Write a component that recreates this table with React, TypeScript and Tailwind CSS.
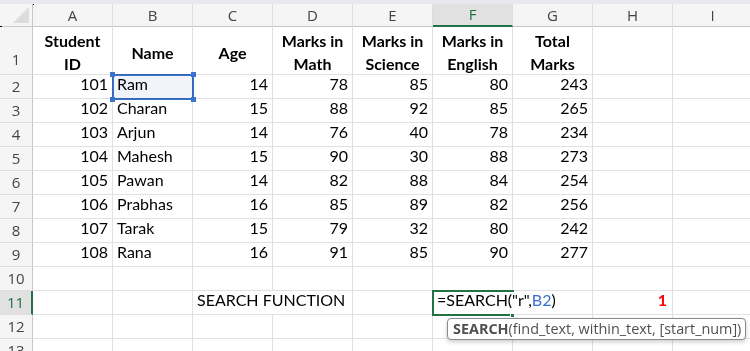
import React from 'react';

const cols = ['A', 'B', 'C', 'D', 'E', 'F', 'G', 'H', 'I'];

const data: (number | string)[][] = [
  [101, 'Ram', 14, 78, 85, 80, 243],
  [102, 'Charan', 15, 88, 92, 85, 265],
  [103, 'Arjun', 14, 76, 40, 78, 234],
  [104, 'Mahesh', 15, 90, 30, 88, 273],
  [105, 'Pawan', 14, 82, 88, 84, 254],
  [106, 'Prabhas', 16, 85, 89, 82, 256],
  [107, 'Tarak', 15, 79, 32, 80, 242],
  [108, 'Rana', 16, 91, 85, 90, 277],
];

const headings = [['Student', 'ID'], ['Name'], ['Age'], ['Marks in', 'Math'], ['Marks in', 'Science'], ['Marks in', 'English'], ['Total', 'Marks']];

const cellFont = { fontFamily: 'Lato, "Liberation Sans", sans-serif' };
const uiFont = { fontFamily: '"Open Sans", "Noto Sans", sans-serif' };

function RowHead({ n, active, h = 'h-[24px]' }: { n: number; active?: boolean; h?: string }) {
  return (
    <div
      style={uiFont}
      className={`${h} flex items-center justify-center text-[15px] ${active ? 'bg-[#e1e1e1] text-[#1e7145] border-r-2 border-r-[#217346]' : 'bg-[#f5f5f5] text-[#444] border-r border-r-[#c8c8c8]'} border-b border-b-[#dedede]`}
    >
      {n}
    </div>
  );
}

function Cell({ children, right, noRight, className = '' }: { children?: React.ReactNode; right?: boolean; noRight?: boolean; className?: string }) {
  return (
    <div
      style={cellFont}
      className={`h-[24px] flex items-end pb-[2px] px-[4px] text-[16px] text-black whitespace-nowrap border-b border-[#e1e1e1] ${noRight ? '' : 'border-r'} ${right ? 'justify-end' : 'justify-start'} ${className}`}
    >
      {children}
    </div>
  );
}

export default function App() {
  return (
    <div className="relative w-[750px] h-[351px] overflow-hidden bg-white">
      <div className="h-[4px] bg-[#e8e8ee]" />
      <div className="grid grid-cols-[33px_repeat(9,80px)]">
        {/* column headers */}
        <div className="relative h-[23px] bg-[#f5f5f5] border-r border-b border-[#c8c8c8]">
          <svg className="absolute right-[3px] bottom-[3px]" width="16" height="16" viewBox="0 0 16 16">
            <polygon points="16,0 16,16 0,16" fill="#dcdcdc" />
          </svg>
        </div>
        {cols.map((c) => (
          <div
            key={c}
            style={uiFont}
            className={`h-[23px] flex items-center justify-center text-[15px] border-r border-r-[#dedede] ${c === 'F' ? 'bg-[#e1e1e1] text-[#1e7145] border-b-2 border-b-[#217346]' : 'bg-[#f5f5f5] text-[#444] border-b border-b-[#c8c8c8]'}`}
          >
            {c}
          </div>
        ))}

        {/* row 1 headings */}
        <RowHead n={1} h="h-[48px] items-end pb-[4px]" />
        {cols.map((c, i) => (
          <div
            key={c}
            style={cellFont}
            className="h-[48px] flex flex-col items-center justify-center pt-[3px] text-[16px] font-bold leading-[23px] text-black border-r border-b border-[#e1e1e1]"
          >
            {headings[i]?.map((l) => <span key={l}>{l}</span>)}
          </div>
        ))}

        {/* data rows */}
        {data.map((r, ri) => (
          <React.Fragment key={ri}>
            <RowHead n={ri + 2} />
            {cols.map((c, ci) => (
              <Cell key={c} right={typeof r[ci] === 'number'}>
                {r[ci]}
              </Cell>
            ))}
          </React.Fragment>
        ))}

        {/* row 10 */}
        <RowHead n={10} />
        {cols.map((c) => <Cell key={c} />)}

        {/* row 11 */}
        <RowHead n={11} active />
        <Cell />
        <Cell />
        <Cell noRight className="text-[15.5px]">SEARCH FUNCTION</Cell>
        <Cell />
        <Cell />
        <Cell noRight>
          =SEARCH("r",<span className="text-[#3a6fd0]">B2</span>)
        </Cell>
        <Cell />
        <Cell right>
          <span className="font-bold text-[#ff0000] pr-[1px]">1</span>
        </Cell>
        <Cell />

        {/* row 12 */}
        <RowHead n={12} />
        {cols.map((c) => <Cell key={c} />)}

        {/* row 13 */}
        <RowHead n={13} />
        {cols.map((c) => <Cell key={c} />)}
      </div>

      {/* B2 range highlight */}
      <div className="absolute left-[112px] top-[74px] w-[82px] h-[26px] border-2 border-[#3a73cc] bg-[#e8eef8]/60 mix-blend-multiply" />
      {[[110, 72], [191, 72], [110, 97], [191, 97]].map(([x, y], i) => (
        <div key={i} className="absolute w-[5px] h-[5px] bg-[#3a73cc]" style={{ left: x, top: y }} />
      ))}

      {/* active cell F11, being edited */}
      <div className="absolute left-[432px] top-[290px] w-[82px] h-[26px] border-2 border-r-0 border-[#217346]" />
      <div className="absolute left-[510px] top-[313px] w-[5px] h-[5px] bg-[#217346] border border-white" />

      {/* formula tooltip */}
      <div
        style={uiFont}
        className="absolute left-[447px] top-[318px] w-[299px] h-[22px] flex items-center pl-[5px] bg-white border border-[#8a8a8a] rounded-[4px] shadow-[0_2px_4px_rgba(0,0,0,0.2)] text-[14.4px] text-[#505050] whitespace-nowrap"
      >
        <span className="font-bold">SEARCH</span>(find_text, within_text, [start_num])
      </div>

      {/* tiny marks */}
      <div className="absolute left-[33px] top-[4px] w-[1px] h-[1px] bg-black" />
      <div className="absolute left-0 top-[26px] w-[2px] h-[1px] bg-black" />
    </div>
  );
}
